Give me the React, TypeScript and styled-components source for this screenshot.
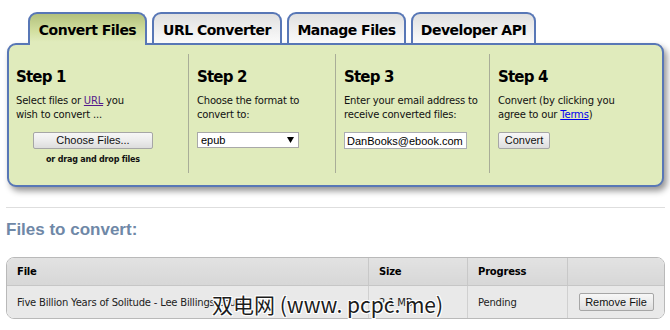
import React from "react";
import styled, { createGlobalStyle } from "styled-components";

const Global = createGlobalStyle`
  html, body { margin: 0; padding: 0; background: #fff; }
  body { font-family: "DejaVu Sans", Verdana, sans-serif; color: #000; }
`;

const Page = styled.div`
  position: relative;
  width: 670px;
  height: 330px;
  overflow: hidden;
  padding-top: 12px;
  box-sizing: border-box;
`;

const TabRow = styled.div`
  display: flex;
  gap: 5px;
  margin-left: 28px;
  height: 31px;
  position: relative;
  z-index: 2;
`;

const Tab = styled.div<{ $active?: boolean; $w: number }>`
  width: ${(p) => p.$w}px;
  height: ${(p) => (p.$active ? 33 : 31)}px;
  box-sizing: border-box;
  flex: none;
  border: 2px solid #5877b6;
  border-bottom: none;
  border-radius: 9px 9px 0 0;
  background: ${(p) =>
    p.$active
      ? "linear-gradient(#b3c17d, #d2df9f 55%, #e0ebbc 90%)"
      : "linear-gradient(#e0e0e0, #f3f3f3 70%, #fafafa)"};
  padding-top: 8px;
  text-align: center;
  font-weight: bold;
  font-size: 14px;
  line-height: 17px;
  letter-spacing: -0.5px;
  color: #000;
`;

const Panel = styled.div`
  margin: 0 6px 0 7px;
  height: 144px;
  box-sizing: border-box;
  border: 2px solid #5877b6;
  border-radius: 9px;
  background: #e0ebbc;
  box-shadow: 3px 4px 6px rgba(0, 0, 0, 0.42);
  display: grid;
  grid-template-columns: 179px 147px 154px 1fr;
  padding: 9px 0 12px 0;
  position: relative;
  z-index: 1;
`;

const Step = styled.div<{ $first?: boolean }>`
  border-left: ${(p) => (p.$first ? "none" : "1px solid #a9ad98")};
  padding: 14px 6px 0 ${(p) => (p.$first ? 7 : 8)}px;
  display: flex;
  flex-direction: column;
  align-items: flex-start;
`;

const StepTitle = styled.h2`
  margin: 0 0 8px;
  font-size: 15px;
  line-height: 18px;
  font-weight: bold;
  letter-spacing: -0.8px;
  color: #000;
`;

const StepText = styled.p`
  margin: 0;
  font-size: 10px;
  line-height: 13.5px;
  letter-spacing: -0.2px;
  color: #111;
  height: 27px;
`;

const Link = styled.a<{ $visited?: boolean }>`
  color: ${(p) => (p.$visited ? "#551a8b" : "#0000ee")};
  text-decoration: underline;
`;

const Controls = styled.div<{ $indent?: number }>`
  margin-top: 11px;
  margin-left: ${(p) => p.$indent ?? 0}px;
  display: flex;
  flex-direction: column;
  align-items: center;
`;

const Button = styled.button<{ $w: number; $h?: number }>`
  width: ${(p) => p.$w}px;
  height: ${(p) => p.$h ?? 17}px;
  box-sizing: border-box;
  padding: 0;
  border: 1px solid #a6a6a6;
  border-radius: 2px;
  background: linear-gradient(#f7f7f7, #ececec 50%, #dddddd);
  font-family: "Liberation Sans", Arial, sans-serif;
  font-size: 11px;
  line-height: 15px;
  color: #111;
`;

const DropHint = styled.div`
  margin-top: 6px;
  font-size: 8px;
  line-height: 10px;
  font-weight: bold;
  letter-spacing: -0.2px;
  color: #111;
`;

const SelectBox = styled.div`
  width: 102px;
  height: 16px;
  box-sizing: border-box;
  border: 1px solid #a9a9a9;
  background: #fff;
  display: flex;
  align-items: center;
  justify-content: space-between;
  padding: 0 4px 0 3px;
  font-family: "Liberation Sans", Arial, sans-serif;
  font-size: 11px;
  color: #000;
`;

const Input = styled.input`
  width: 123px;
  height: 17px;
  box-sizing: border-box;
  border: 1px solid #abadb3;
  background: #fff;
  padding: 0 2px;
  margin: 0;
  font-family: "Liberation Sans", Arial, sans-serif;
  font-size: 11px;
  color: #000;
  outline: none;
`;

const Rule = styled.hr`
  margin: 20px 5px 0 6px;
  border: none;
  border-top: 1px solid #dedede;
  height: 0;
`;

const SectionTitle = styled.h3`
  margin: 11px 0 0 6px;
  font-family: "Liberation Sans", Arial, sans-serif;
  font-size: 17px;
  line-height: 22px;
  font-weight: bold;
  color: #6f88a7;
`;

const TableWrap = styled.div`
  margin: 16px 5px 0 6px;
  border: 1px solid #b9b9b9;
  border-radius: 8px;
  overflow: hidden;
`;

const Table = styled.table`
  width: 100%;
  border-collapse: collapse;
  table-layout: fixed;
  font-size: 10px;
  letter-spacing: -0.2px;
`;

const HeadCell = styled.th<{ $w?: number }>`
  width: ${(p) => (p.$w ? `${p.$w}px` : "auto")};
  height: 27px;
  padding: 0 0 0 10px;
  text-align: left;
  font-weight: bold;
  color: #000;
  background: linear-gradient(#e2e2e2, #d7d7d7);
  border-bottom: 1px solid #c6c6c6;
  border-left: 1px solid #c8c8c8;
  &:first-child { border-left: none; }
`;

const Cell = styled.td<{ $center?: boolean }>`
  height: 32px;
  padding: 0 0 0 ${(p) => (p.$center ? 0 : 10)}px;
  text-align: ${(p) => (p.$center ? "center" : "left")};
  background: #e9e9e9;
  color: #222;
  border-left: 1px solid #d0d0d0;
  white-space: nowrap;
  overflow: hidden;
  &:first-child { border-left: none; }
`;

const Watermark = styled.div`
  position: absolute;
  left: 212px;
  top: 291px;
  font-family: "Noto Sans CJK SC", "DejaVu Sans", sans-serif;
  font-size: 21px;
  line-height: 26px;
  color: #1c1c1c;
  white-space: nowrap;
  text-shadow: 1px 1px 0 #fff, -1px -1px 0 #fff, 1px -1px 0 #fff, -1px 1px 0 #fff,
    0 0 2px #fff;
  pointer-events: none;
  z-index: 5;
`;

const Arrow = () => (
  <svg width="7" height="6" viewBox="0 0 7 6">
    <path d="M0 0 H7 L3.5 6 Z" fill="#000" />
  </svg>
);

export default function App() {
  return (
    <Page>
      <Global />
      <TabRow>
        <Tab $active $w={119}>Convert Files</Tab>
        <Tab $w={130}>URL Converter</Tab>
        <Tab $w={119}>Manage Files</Tab>
        <Tab $w={125}>Developer API</Tab>
      </TabRow>
      <Panel>
        <Step $first>
          <StepTitle>Step 1</StepTitle>
          <StepText>
            Select files or <Link $visited>URL</Link> you
            <br />
            wish to convert ...
          </StepText>
          <Controls $indent={17}>
            <Button $w={120}>Choose Files...</Button>
            <DropHint>or drag and drop files</DropHint>
          </Controls>
        </Step>
        <Step>
          <StepTitle>Step 2</StepTitle>
          <StepText>
            Choose the format to
            <br />
            convert to:
          </StepText>
          <Controls>
            <SelectBox>
              <span>epub</span>
              <Arrow />
            </SelectBox>
          </Controls>
        </Step>
        <Step>
          <StepTitle>Step 3</StepTitle>
          <StepText>
            Enter your email address to
            <br />
            receive converted files:
          </StepText>
          <Controls>
            <Input readOnly value="DanBooks@ebook.com" />
          </Controls>
        </Step>
        <Step>
          <StepTitle>Step 4</StepTitle>
          <StepText>
            Convert (by clicking you
            <br />
            agree to our <Link>Terms</Link>)
          </StepText>
          <Controls>
            <Button $w={52}>Convert</Button>
          </Controls>
        </Step>
      </Panel>
      <Rule />
      <SectionTitle>Files to convert:</SectionTitle>
      <TableWrap>
        <Table>
          <thead>
            <tr>
              <HeadCell $w={351}>File</HeadCell>
              <HeadCell $w={88}>Size</HeadCell>
              <HeadCell $w={89}>Progress</HeadCell>
              <HeadCell />
            </tr>
          </thead>
          <tbody>
            <tr>
              <Cell>Five Billion Years of Solitude - Lee Billings.epub</Cell>
              <Cell>2.1 MB</Cell>
              <Cell>Pending</Cell>
              <Cell $center>
                <Button $w={75} $h={18}>Remove File</Button>
              </Cell>
            </tr>
          </tbody>
        </Table>
      </TableWrap>
      <Watermark>双电网 (www. pcpc. me)</Watermark>
    </Page>
  );
}
